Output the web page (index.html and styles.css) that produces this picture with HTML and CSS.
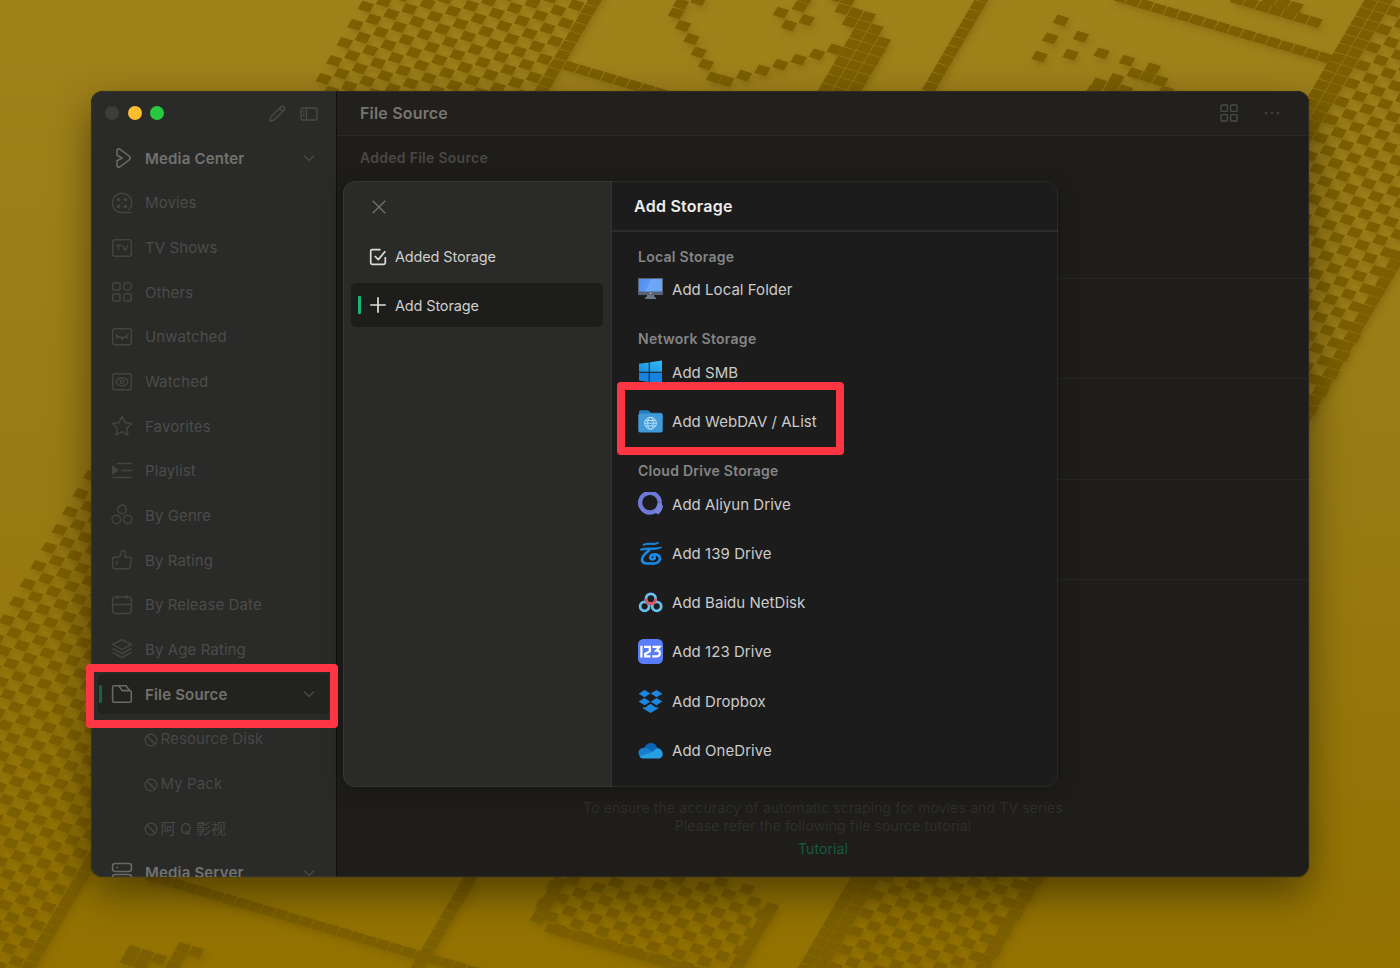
FILE: index.html
```html
<!DOCTYPE html>
<html lang="en">
<head>
<meta charset="utf-8">
<title>File Source</title>
<link rel="stylesheet" href="styles.css">
</head>
<body>
<svg class="backdrop" id="backdrop" width="1400" height="968" viewBox="0 0 1400 968"></svg>
<div class="window">
  <aside class="sidebar">
    <div class="titlebar">
      <span class="light off"></span><span class="light amber"></span><span class="light green"></span>
      <svg class="tool pencil" width="18" height="18" viewBox="0 0 18 18"><path d="M2 16l.9-4.200L13 1.800a1.800 1.800 0 0 1 2.600 0l.5.5a1.800 1.800 0 0 1 0 2.600L6.100 15 2 16zM11.500 3.300l3.100 3.100"/></svg>
      <svg class="tool" width="18" height="14" viewBox="0 0 18 14"><rect x="1" y="1" width="16" height="12" rx="1.500"/><path d="M6.500 1v12M3 4h1.500M3 6.500h1.500M3 9h1.500"/></svg>
    </div>
    <nav class="menu">
      <div class="row strong"><svg class="ico" viewBox="0 0 22 22"><path d="M6 4v4.200l5.200 2.800L6 13.800V18c0 2 1.200 2.700 3 1.700l8-5.800c3-2 3-3.900 0-5.800L9 2.300C7.200 1.300 6 2 6 4z"/></svg><span>Media Center</span><svg class="chev" viewBox="0 0 12 8"><path d="M1 1.500l5 5 5-5"/></svg></div>
      <div class="row"><svg class="ico" viewBox="0 0 22 22"><path d="M20.500 20.600H11a9.600 9.600 0 1 1 6.500-2.500"/><g class="solid"><circle cx="7.600" cy="7.600" r="1.900"/><circle cx="14.400" cy="7.600" r="1.900"/><circle cx="7.600" cy="14.400" r="1.900"/><circle cx="14.400" cy="14.400" r="1.900"/><circle cx="11" cy="11" r=".9"/></g></svg><span>Movies</span></div>
      <div class="row"><svg class="ico" viewBox="0 0 22 22"><rect x="1.700" y="2.700" width="18.600" height="16.600" rx="2"/><path d="M5 8.300h5.200M7.600 8.300v5.200M11.500 8.300l2.700 5 2.700-5"/></svg><span>TV Shows</span></div>
      <div class="row"><svg class="ico" viewBox="0 0 22 22"><rect x="1.700" y="1.700" width="7.400" height="7.400" rx="1.800"/><circle cx="16.500" cy="5.400" r="3.900"/><rect x="1.700" y="12.700" width="7.400" height="7.400" rx="1.800"/><rect x="12.800" y="12.700" width="7.400" height="7.400" rx="1.800"/></svg><span>Others</span></div>
      <div class="row"><svg class="ico" viewBox="0 0 22 22"><rect x="1.700" y="2.700" width="18.600" height="16" rx="2"/><path d="M4.800 8c3 4.800 9.400 4.800 12.400 0M7 10.600l-2 2M11 11.700v2.800M15 10.600l2 2"/></svg><span>Unwatched</span></div>
      <div class="row"><svg class="ico" viewBox="0 0 22 22"><rect x="1.700" y="2.700" width="18.600" height="16" rx="2"/><ellipse cx="11" cy="10.700" rx="5.800" ry="4"/><circle cx="11" cy="10.700" r="1.700"/></svg><span>Watched</span></div>
      <div class="row"><svg class="ico" viewBox="0 0 22 22"><path d="M11 1.400l2.900 6.200 6.700.9-4.900 4.700 1.200 6.800-5.900-3.300-5.900 3.300 1.200-6.800L1.400 8.500l6.700-.9z"/></svg><span>Favorites</span></div>
      <div class="row"><svg class="ico" viewBox="0 0 22 22"><path d="M6 3.500h14.800M10.500 10.500h10.300M1.200 17.600h19.600"/><path class="solid" d="M1 5.200l7 5-7 4.500z"/></svg><span>Playlist</span></div>
      <div class="row"><svg class="ico" viewBox="0 0 22 22"><circle cx="11" cy="5.400" r="4.300"/><circle cx="5.300" cy="15.500" r="4.300"/><circle cx="16.700" cy="15.500" r="4.300"/></svg><span>By Genre</span></div>
      <div class="row"><svg class="ico" viewBox="0 0 22 22"><path d="M3 8.300h4.200c2-.8 3-3 3-5.300 0-2.500 4.300-2.100 4.300 1.200 0 1.400-.4 2.500-.8 4h5c1.300 0 2 .8 1.800 2L19 18c-.2 1-.9 1.800-2 1.800H3.600c-1 0-1.700-.6-1.700-1.500L1.500 10c0-1 .6-1.700 1.500-1.700zM5.700 12v4"/></svg><span>By Rating</span></div>
      <div class="row"><svg class="ico" viewBox="0 0 22 22"><rect x="1.600" y="3" width="18.800" height="16.500" rx="3"/><path d="M1.600 10.500h18.800M6.500 1v4M15.500 1v4"/></svg><span>By Release Date</span></div>
      <div class="row"><svg class="ico" viewBox="0 0 22 22"><path d="M11 1.800l9.500 4.600L11 11.300 1.500 6.400zM1.500 10.500l9.500 5 9.500-5M1.500 14.500l9.500 5 9.500-5"/></svg><span>By Age Rating</span></div>
      <div class="row strong active"><svg class="ico" viewBox="0 0 22 22"><path d="M7.700 2.800H3.400c-1 0-1.800.8-1.800 1.800v13.200c0 .9.700 1.500 1.500 1.500h15.600c.9 0 1.600-.7 1.600-1.600V9.500c0-1.100-.8-1.900-1.900-1.900h-7.200L7.700 2.800h7.200l4 4.900"/></svg><span>File Source</span><svg class="chev" viewBox="0 0 12 8"><path d="M1 1.500l5 5 5-5"/></svg></div>
      <div class="row sub"><svg class="ban" viewBox="0 0 14 14"><circle cx="7" cy="7" r="5.900"/><path d="M3 3l8 8"/></svg><span>Resource Disk</span></div>
      <div class="row sub"><svg class="ban" viewBox="0 0 14 14"><circle cx="7" cy="7" r="5.900"/><path d="M3 3l8 8"/></svg><span>My Pack</span></div>
      <div class="row sub"><svg class="ban" viewBox="0 0 14 14"><circle cx="7" cy="7" r="5.900"/><path d="M3 3l8 8"/></svg><span>阿 Q 影视</span></div>
      <div class="row strong"><svg class="ico" viewBox="0 0 22 22"><rect x="1.600" y="1.500" width="18.800" height="8" rx="2.500"/><rect x="1.600" y="12.500" width="18.800" height="8" rx="2.500"/><path d="M5.500 5.500h1.500"/></svg><span>Media Server</span><svg class="chev" viewBox="0 0 12 8"><path d="M1 1.500l5 5 5-5"/></svg></div>
    </nav>
  </aside>
  <main class="content">
    <header class="topbar"><h1>File Source</h1>
      <svg class="tool" width="18" height="18" viewBox="0 0 18 18"><rect x="1" y="1" width="6.400" height="6.400" rx=".8"/><rect x="10.600" y="1" width="6.400" height="6.400" rx=".8"/><rect x="1" y="10.600" width="6.400" height="6.400" rx=".8"/><rect x="10.600" y="10.600" width="6.400" height="6.400" rx=".8"/></svg>
      <svg class="dots" width="16" height="4" viewBox="0 0 16 4"><circle cx="2" cy="2" r="1.200"/><circle cx="8" cy="2" r="1.200"/><circle cx="14" cy="2" r="1.200"/></svg>
    </header>
    <div class="list"><h2>Added File Source</h2>
      <div class="card first"></div><div class="card"></div><div class="card"></div><div class="card"></div>
    </div>
    <footer class="hint"><p>To ensure the accuracy of automatic scraping for movies and TV series</p><p>Please refer the following file source tutorial</p><a>Tutorial</a></footer>
  </main>
</div>

<section class="modal">
  <div class="side">
    <svg class="close" width="14" height="14" viewBox="0 0 14 14"><path d="M.7.7l12.600 12.600M13.300.7L.7 13.300"/></svg>
    <div class="tab"><svg viewBox="0 0 18 18"><path d="M11.500 1.700H3.200c-.9 0-1.500.6-1.500 1.500v11.600c0 .9.600 1.500 1.500 1.500h11.600c.9 0 1.500-.6 1.500-1.500V9M5.800 8l3.500 3.600 7-8.400"/></svg><span>Added Storage</span></div>
    <div class="tab on"><svg viewBox="0 0 18 18"><path d="M9 1.200v15.600M1.200 9h15.600"/></svg><span>Add Storage</span></div>
  </div>
  <div class="pane">
    <header><h3>Add Storage</h3></header>
    <div class="options">
      <h4>Local Storage</h4>
      <div class="opt"><svg viewBox="0 0 25 25"><defs><linearGradient id="scr" x1="0" x2="1" y1="0" y2=".25"><stop offset="0" stop-color="#4e8eef"/><stop offset=".5" stop-color="#5b9af4"/><stop offset=".5" stop-color="#70a8f7"/><stop offset="1" stop-color="#6ba4f5"/></linearGradient></defs><path fill="#566273" d="M0 1h25v17H0z"/><path fill="url(#scr)" d="M1 2h23v12.500H1z"/><path fill="#6d7786" d="M9 18h7l.8 2.500H8.200zM7 20.500h11V22H7z"/><circle cx="12.500" cy="16.300" r=".8" fill="#cdd3dc"/></svg><span>Add Local Folder</span></div>
      <h4 class="gap">Network Storage</h4>
      <div class="opt"><svg viewBox="0 0 25 25"><defs><linearGradient id="win" x1="1" y1="0" x2="0" y2="1"><stop offset="0" stop-color="#35bdf5"/><stop offset="1" stop-color="#168ee5"/></linearGradient></defs><path fill="url(#win)" d="M1 3.800l9.700-1.400v9.300H1zM11.700 2.200L24 .6v11.100H11.700z"/><path fill="#1583df" d="M1 12.800h9.700V22L1 20.500zM11.700 12.800H24V24l-12.300-1.800z"/></svg><span>Add SMB</span></div>
      <div class="opt"><svg viewBox="0 0 25 25"><path fill="#2580c3" d="M1 3.500C1 2 1.600 1.300 3 1.300h7l3 2.400h9.500c1.400 0 2 .8 2 2V10H1z"/><path fill="#419bd8" d="M.3 6.500c0-1.200.7-1.700 1.800-1.700h20.800c1.200 0 1.800.6 1.800 1.700v15c0 1.300-.7 1.900-1.900 1.900H2.200c-1.200 0-1.900-.6-1.900-1.900z"/><g fill="none" stroke="#b7e0f7" stroke-width="1"><circle cx="12.500" cy="14.200" r="5.900"/><ellipse cx="12.500" cy="14.200" rx="2.900" ry="5.900"/><path d="M7.300 11.500h10.400M6.600 14.200h11.800M7.300 16.900h10.400"/></g></svg><span>Add WebDAV / AList</span></div>
      <h4 class="gap">Cloud Drive Storage</h4>
      <div class="opt"><svg viewBox="0 0 25 25"><path d="M20.600 15.200A9.800 9.800 0 1 1 21.700 10.500" fill="none" stroke="#6f79d8" stroke-width="4.300"/><path d="M19.600 10.500h4.300c0 2 .1 3 1.100 3.300-.5 4-2.300 6.700-5 8.700l-4.200-3c1.800-1.300 2.700-2.700 3-4.500-.7-1.200.8-2.800.8-4.500z" fill="#7881dc"/></svg><span>Add Aliyun Drive</span></div>
      <div class="opt"><svg viewBox="0 0 25 25" fill="none" stroke="#168bea"><path d="M5 3.400c5-2.600 9 .3 16-2-3 3-7 2-10 2.100-3 0-4 0-6 1z" fill="#168bea" stroke-width=".8"/><path d="M2 8.500c6-3 13-.2 22-2.500-4 3.500-12 2-21 3.200z" fill="#168bea" stroke-width=".8"/><path stroke-width="2.700" stroke-linecap="round" d="M11 9.500c-4 3-7 6.300-7 9.300 0 2.800 2 3.700 5.500 3.700h6.500c7 0 8.300-9 1-9.200-5-.2-6.500 5-2.500 5 1.800 0 2.500-1 2.200-2.300"/></svg><span>Add 139 Drive</span></div>
      <div class="opt"><svg viewBox="0 0 25 25" fill="none" stroke-width="2.800"><circle cx="6.600" cy="16.300" r="4.500" stroke="#68bfec"/><circle cx="18.700" cy="16.300" r="4.500" stroke="#68bfec"/><circle cx="12.800" cy="8.800" r="4.900" stroke="#68bfec"/><path d="M7.900 8.800a4.900 4.900 0 0 0 9.800 0" stroke="#e0525f"/></svg><span>Add Baidu NetDisk</span></div>
      <div class="opt"><svg viewBox="0 0 25 25"><rect width="25" height="25" rx="5.500" fill="#597dfa"/><path fill="none" stroke="#fff" stroke-width="2.200" d="M3.400 6.800v11.600M6 7.800h5.800v4.500L7.200 15v2.300h5.300M14.500 7.800h7l-3.200 3.800h1.500c1.700 0 2 1 2 2.700 0 2-.8 3-2.500 3h-5"/></svg><span>Add 123 Drive</span></div>
      <div class="opt"><svg viewBox="0 0 25 25" fill="#1d86de"><path d="M6.600 1L12.300 4.600 6.500 8.300.6 4.800zM18.400 1l6 3.800-5.900 3.500-5.800-3.700zM.6 12.500L6.500 9l5.800 3.700-5.700 3.600zM18.500 9l5.900 3.500-6 3.800-5.700-3.600zM5 17.800l1.700.9 5.800-3.900 5.800 3.900 1.700-.9v1.700L12.500 24 5 19.500z"/></svg><span>Add Dropbox</span></div>
      <div class="opt"><svg viewBox="0 0 25 25"><path fill="#0867b8" d="M6 10.500C8.500 3.500 17 3 19.600 10.500l-3 5H7z"/><path fill="#177fcd" d="M1.500 18C-1 14 1.500 9.800 6 9.700c3.500-.1 6 2.300 9 4.200L3 19.500z"/><path fill="#279fe2" d="M15 13.800c2.500-2.800 4-4 6-3.300 5 1.800 5 9.900-.7 10H5c-1.500 0-2.800-.7-3.500-2z"/></svg><span>Add OneDrive</span></div>
    </div>
  </div>
</section>
<div class="mark mark-source"></div>
<div class="mark mark-webdav"></div>
<script src="backdrop.js"></script>
</body>
</html>
```
FILE: styles.css
```css
* { box-sizing: border-box; margin: 0; padding: 0; }
body { width: 1400px; height: 968px; padding: 91px; overflow: hidden; position: relative; font-family: Inter, "Noto Sans CJK SC", sans-serif; font-size: 15px; background: linear-gradient(#a0821b, #987b14 50%, #937200); }
svg { display: block; flex: none; }
h1, h2, h3, h4 { font-weight: 600; }
.backdrop { position: absolute; left: 0; top: 0; }
.window { position: relative; width: 1218px; height: 786px; display: flex; border-radius: 12px; overflow: hidden; background: #1e1d1a; box-shadow: 0 0 1px rgba(20,18,5,.6), 0 16px 40px rgba(0,0,0,.45); }
.window::after { content: ""; position: absolute; inset: 0; border-radius: 12px; border: 1px solid rgba(125,120,80,.14); }
.sidebar { width: 246px; background: #2a2a28; border-right: 1px solid #10100e; display: flex; flex-direction: column; }
.titlebar { height: 45px; flex: none; padding: 0 18px 2px 14px; display: flex; align-items: center; }
.light { width: 14px; height: 14px; border-radius: 50%; margin-right: 8.500px; }
.off { background: #3c3d3b; } .amber { background: #febc2e; } .green { background: #28c840; }
.tool { fill: none; stroke: #494947; stroke-width: 1.400; margin-top: 2px; }
.pencil { margin-left: auto; margin-right: 14px; }
.menu { display: flex; flex-direction: column; }
.row { height: 44.650px; flex: none; display: flex; align-items: center; padding: 0 20px; color: #4c4c4a; letter-spacing: .1px; position: relative; }
.ico { width: 22px; height: 22px; margin-right: 12px; fill: none; stroke: #434341; stroke-width: 1.500; stroke-linejoin: round; }
.solid { fill: #434341; stroke: none; }
.strong { color: #72726f; font-weight: 600; letter-spacing: .17px; }
.strong .ico { stroke: #686865; stroke-width: 1.600; }
.chev { width: 12px; height: 8px; margin-left: auto; margin-right: 1px; fill: none; stroke: #484846; stroke-width: 1.400; }
.active::before { content: ""; position: absolute; z-index: 0; inset: 2px 7px; border-radius: 5px; background: #22221e; }
.active::after { content: ""; position: absolute; left: 8px; top: 13.500px; width: 3px; height: 17.500px; border-radius: 1px; background: #176245; }
.active > * { position: relative; }
.sub { padding-left: 52.500px; color: #474745; }
.ban { width: 14px; height: 14px; margin-right: 3px; margin-top: 3px; fill: none; stroke: #474745; stroke-width: 1.200; }
.content { flex: 1; display: flex; flex-direction: column; }
.topbar { height: 45px; flex: none; display: flex; align-items: center; padding: 0 29px 0 23px; background: #21201d; border-bottom: 1px solid #292825; }
.topbar h1 { font-size: 16px; color: #777570; letter-spacing: .18px; margin-right: auto; }
.topbar .tool { margin: 0 26px 0 0; }
.dots { fill: #454441; }
.list { height: 545px; }
.list h2 { height: 43px; line-height: 43px; margin-bottom: 1px; padding-left: 23px; font-size: 14px; letter-spacing: .28px; color: #494844; }
.card { height: 100.400px; border-bottom: 1px solid #262521; margin-left: 6px; }
.card.first { height: 99px; }
.hint { padding-top: 118px; color: #2f2e2b; text-align: center; font-size: 14px; line-height: 18px; letter-spacing: .115px; }
.hint a { display: block; margin-top: 5px; color: #185a3f; }
.modal { position: absolute; left: 343px; top: 181px; width: 715px; height: 606px; display: flex; border-radius: 12px; overflow: hidden; background: #1c1c1c; box-shadow: 0 3px 22px rgba(0,0,0,.28); }
.modal::after { content: ""; position: absolute; inset: 0; border: 1px solid rgba(255,255,255,.06); border-radius: 12px; pointer-events: none; }
.side { width: 269px; background: #2a2a28; border-right: 1px solid #333332; padding: 19px 8px; }
.close { margin: 0 0 18px 21px; fill: none; stroke: #73736f; stroke-width: 1.300; }
.tab { height: 49px; display: flex; align-items: center; padding-left: 18px; gap: 8px; color: #cfcfcd; font-size: 14.500px; letter-spacing: -.15px; }
.tab svg { width: 18px; height: 18px; fill: none; stroke: #dedddb; stroke-width: 1.700; stroke-linejoin: round; }
.tab.on { height: 44px; margin-top: 2px; border-radius: 5px; background: #1d1d1c; position: relative; }
.tab.on::before { content: ""; position: absolute; left: 7px; top: 13px; width: 3px; height: 18px; background: #16b878; border-radius: 1px; }
.pane { flex: 1; }
.pane header { height: 51px; border-bottom: 2px solid #2b2b2b; display: flex; align-items: center; padding: 1px 0 0 22px; }
.pane h3 { font-size: 16px; letter-spacing: .25px; color: #ededed; }
.options { padding: 15.500px 26px; }
.options h4 { height: 17.800px; line-height: 17.800px; font-size: 14px; letter-spacing: .27px; color: #858585; }
.options .gap { margin-top: 15.700px; }
.opt { height: 49.200px; display: flex; align-items: center; gap: 9px; color: #cbcbcb; letter-spacing: .04px; }
.opt svg { width: 25px; height: 25px; }
.mark { position: absolute; border: 8px solid #fe3643; border-radius: 4px; }
.mark-source { left: 86px; top: 664px; width: 252px; height: 64px; }
.mark-webdav { left: 617px; top: 382px; width: 227px; height: 73px; }
```
FILE: backdrop.js
```javascript
// Slanted mosaic on the desktop: every tile is a parallelogram on the U/V lattice.
const U = [12.75, 3.75], V = [-5.28, 9.02], O = [366, 6.7];
const svg = document.getElementById('backdrop');
const half = 0.46;
const tile = (x, y) => {
  const p = [[-1, -1], [1, -1], [1, 1], [-1, 1]].map(([a, b]) =>
    (x + half * (a * U[0] + b * V[0])).toFixed(1) + ' ' + (y + half * (a * U[1] + b * V[1])).toFixed(1));
  return 'M' + p.join('L') + 'Z';
};
const inside = (x, y, poly) => {
  let r = false;
  for (let i = 0, j = poly.length - 1; i < poly.length; j = i++) {
    const [a, b] = poly[i], [c, d] = poly[j];
    if ((b > y) !== (d > y) && x < (c - a) * (y - b) / (d - b) + a) r = !r;
  }
  return r;
};
let d = '';
const area = (poly, checker, origin = O) => {
  for (let i = -90; i < 140; i++) for (let j = -90; j < 160; j++) {
    if (checker && (i + j) % 2) continue;
    const x = origin[0] + i * U[0] + j * V[0], y = origin[1] + i * U[1] + j * V[1];
    if (x > -15 && x < 1415 && y > -15 && y < 983 && inside(x, y, poly)) d += tile(x, y);
  }
};
const run = (x, y, n, s) => { for (let k = 0; k < n; k++) d += tile(x + k * s[0], y + k * s[1]); };
const dots = list => list.forEach(([x, y]) => { d += tile(x, y); });

// left band, running behind the window to the lower left corner
area([[378, -20], [597, -20], [23, 968], [-210, 968]], true);
run(599.5, -8, 110, V);
run(570.5, 66.7, 12, U);
// heart
dots([[698.7, 0], [681, 4], [676, 13.3], [683, 26], [691.5, 39], [698.7, 52.3], [706, 64.3], [714, 77.3], [726.3, 81], [744, 75.7], [762.5, 70.3], [780.4, 64.7], [798.7, 59.7], [817, 54.3], [834.8, 49.3], [781, 12.7], [789, 25.3], [806.7, 20], [800, 6.7], [805.8, -2]]);
area([[833, -9], [858, -8], [857, 9], [876, 14], [877, 27], [893, 37], [862, 96], [817, 96], [851, 25], [836, 12]], false, [850, 22]);
run(983, -3, 11, V);
run(469, 880, 11, V);
// rows and specks in the upper right
run(1120.5, -2.5, 17, U);
dots([[1061, 20.3], [1050.3, 38.3], [1081, 36.7], [1039.7, 56.7], [1070.7, 54.7], [1101.7, 53.3], [1127, 60.7], [1152.7, 68.3], [1134.7, 73.3], [1147.3, 77], [1160.3, 81], [1116.3, 79], [1099, 83.3], [1111.7, 87.3], [1093.3, 91], [1125, 90.5], [1166, 91.5]]);
run(1238, -.5, 7, U);
run(1270, -.5, 3, U);
// right band and its lower end
const R = [1369, 4];
area([[1369, -12], [1394, -5], [822, 977], [795, 977]], false, R);
area([[1394, -5], [1550, -20], [1393, 268], [985, 980], [822, 980]], true, R);
run(1399, 256, 85, V);
// lower octagon
area([[553, 878], [755, 878], [774, 908], [737, 968], [680, 968], [551, 928], [535, 908]], true, [580, 893]);
run(559, 882, 5, V);
run(552, 929, 12, U);
run(771, 908, 8, V);
run(153, 877, 27, U);
dots([[133, 951], [146, 955], [159, 959], [128, 960], [141, 964], [183, 948], [196, 952], [178, 957], [173, 966]]);

svg.innerHTML = '<defs><filter id="soft" x="-5%" y="-5%" width="110%" height="110%"><feDropShadow dx="2" dy="4" stdDeviation="3" flood-color="#594300" flood-opacity=".28"/></filter></defs>' +
  '<path d="' + d + '" fill="#7c5e00" filter="url(#soft)"/>';
```
